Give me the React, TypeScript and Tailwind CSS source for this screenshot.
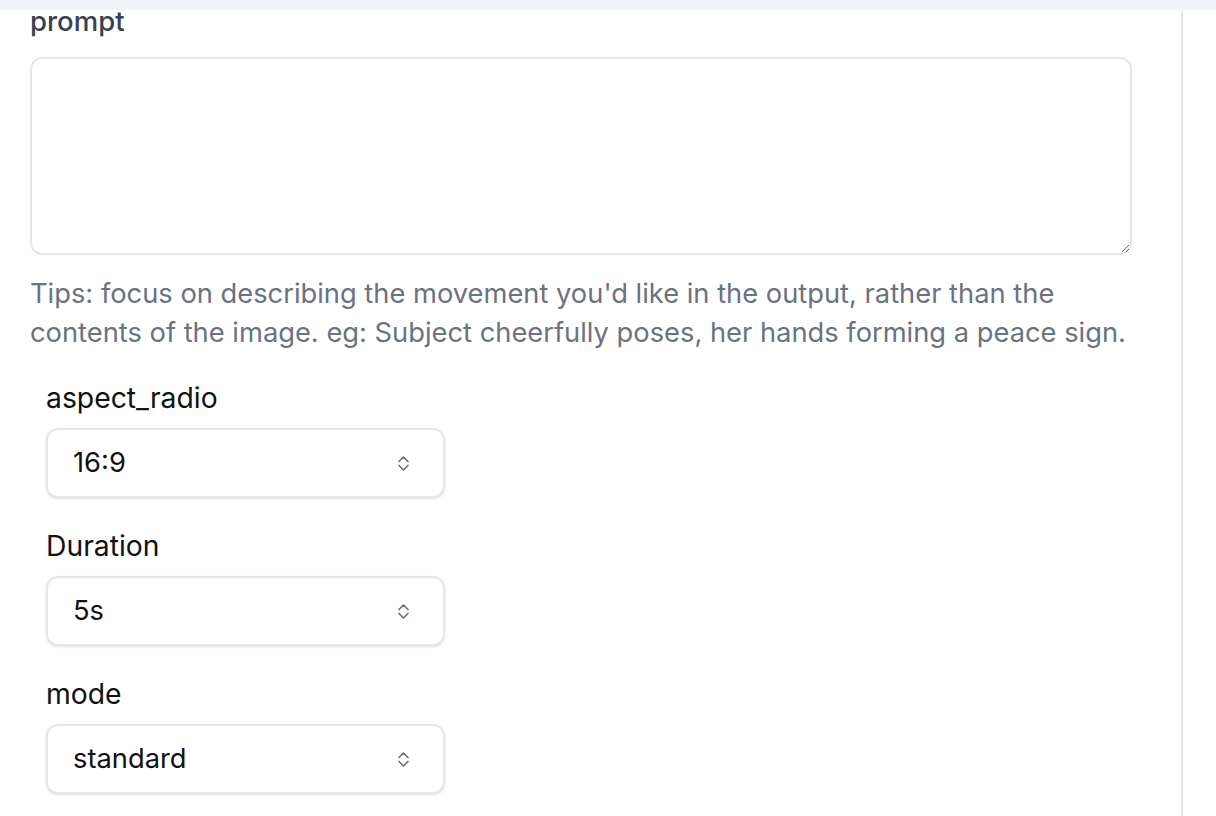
import type { ReactNode } from "react";

const font = { fontFamily: "Inter, 'Noto Sans', sans-serif" };

function UpDown() {
  return (
    <svg width="15" height="17" viewBox="0 0 15 17" fill="none" stroke="#6b7280" strokeWidth="1.7" strokeLinecap="round" strokeLinejoin="round">
      <path d="M3 6.5l4.5-4.5 4.5 4.5" />
      <path d="M3 10.5l4.5 4.5 4.5-4.5" />
    </svg>
  );
}

function Field({ label, value, first }: { label: string; value: string; first?: boolean }) {
  return (
    <div className={first ? "mt-[30px]" : "mt-[32px]"}>
      <div className="text-[28.3px] leading-[32px] text-[#111111]">{label}</div>
      <div className="mt-[14px] flex h-[70px] w-[399px] items-center justify-between rounded-[12px] border-2 border-[#e5e7eb] bg-white pl-[25px] pr-[32px] shadow-sm">
        <span className="text-[27.3px] text-[#111111]">{value}</span>
        <UpDown />
      </div>
    </div>
  );
}

function Section({ children }: { children: ReactNode }) {
  return <div className="pl-[16px]">{children}</div>;
}

export default function App() {
  return (
    <div className="h-[816px] w-[1216px] overflow-hidden bg-white" style={font}>
      <div className="h-[10px] bg-[#f1f5f9]" />
      <div className="flex h-[806px]">
        <div className="w-[1183px] border-r-2 border-[#e5e7eb] pl-[30px] pr-[49px]">
          <div className="-mt-[2px] text-[27.5px] leading-[26px] font-medium text-[#374151]">prompt</div>
          <textarea className="mt-[23px] block h-[198px] w-full rounded-[12px] border-2 border-[#e5e7eb] bg-white p-4 text-[26px] outline-none" />
          <p className="mt-[19px] text-[27.3px] leading-[39px] text-[#6b7280]">
            Tips: focus on describing the movement you'd like in the output, rather than the contents of the image. eg: Subject cheerfully poses, her hands forming a peace sign.
          </p>
          <Section>
            <Field label="aspect_radio" value="16:9" first />
            <Field label="Duration" value="5s" />
            <Field label="mode" value="standard" />
          </Section>
        </div>
        <div className="flex-1" />
      </div>
    </div>
  );
}
